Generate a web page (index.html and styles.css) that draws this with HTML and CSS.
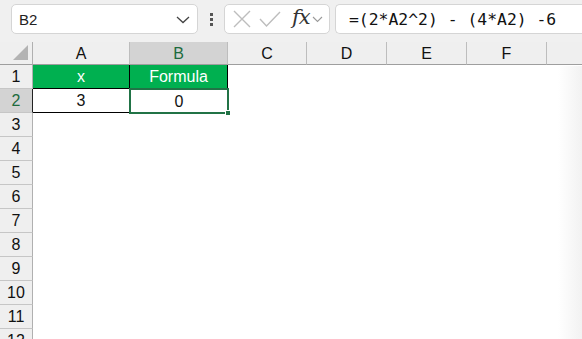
FILE: index.html
```html
<!DOCTYPE html>
<html>
<head>
<meta charset="utf-8">
<link rel="stylesheet" href="styles.css">
</head>
<body>
<div class="app">
  <div class="toolbar">
    <div class="namebox">
      <span class="name">B2</span>
      <svg class="chev" width="14" height="8" viewBox="0 0 14 8"><path d="M1 1 L7 6.5 L13 1" fill="none" stroke="#444" stroke-width="1.3"/></svg>
    </div>
    <div class="dots"><i></i><i></i><i></i></div>
    <div class="fxbox">
      <svg width="18" height="18" viewBox="0 0 18 18"><path d="M1 1 L17 17 M17 1 L1 17" stroke="#bdbdbd" stroke-width="1.4"/></svg>
      <svg width="22" height="18" viewBox="0 0 22 18"><path d="M1 9 L7.5 16 L21 2" fill="none" stroke="#bdbdbd" stroke-width="1.4"/></svg>
      <span class="fx">fx</span>
      <svg width="11" height="7" viewBox="0 0 11 7"><path d="M1 1 L5.5 5.5 L10 1" fill="none" stroke="#9a9a9a" stroke-width="1.1"/></svg>
    </div>
    <div class="formula">=(2*A2^2) - (4*A2) -6</div>
  </div>
  <div class="sheet">
    <div class="corner"><span class="tri"></span></div>
    <div class="ch">A</div>
    <div class="ch sel">B</div>
    <div class="ch">C</div>
    <div class="ch">D</div>
    <div class="ch">E</div>
    <div class="ch">F</div>
    <div class="ch last"></div>

    <div class="rh">1</div>
    <div class="c g bl">x</div>
    <div class="c g br">Formula</div>
    <div class="c"></div><div class="c"></div><div class="c"></div><div class="c"></div><div class="c"></div>

    <div class="rh sel">2</div>
    <div class="c v">3</div>
    <div class="c">0</div>
    <div class="c"></div><div class="c"></div><div class="c"></div><div class="c"></div><div class="c"></div>

    <div class="rh">3</div><div class="c"></div><div class="c"></div><div class="c"></div><div class="c"></div><div class="c"></div><div class="c"></div><div class="c"></div>
    <div class="rh">4</div><div class="c"></div><div class="c"></div><div class="c"></div><div class="c"></div><div class="c"></div><div class="c"></div><div class="c"></div>
    <div class="rh">5</div><div class="c"></div><div class="c"></div><div class="c"></div><div class="c"></div><div class="c"></div><div class="c"></div><div class="c"></div>
    <div class="rh">6</div><div class="c"></div><div class="c"></div><div class="c"></div><div class="c"></div><div class="c"></div><div class="c"></div><div class="c"></div>
    <div class="rh">7</div><div class="c"></div><div class="c"></div><div class="c"></div><div class="c"></div><div class="c"></div><div class="c"></div><div class="c"></div>
    <div class="rh">8</div><div class="c"></div><div class="c"></div><div class="c"></div><div class="c"></div><div class="c"></div><div class="c"></div><div class="c"></div>
    <div class="rh">9</div><div class="c"></div><div class="c"></div><div class="c"></div><div class="c"></div><div class="c"></div><div class="c"></div><div class="c"></div>
    <div class="rh">10</div><div class="c"></div><div class="c"></div><div class="c"></div><div class="c"></div><div class="c"></div><div class="c"></div><div class="c"></div>
    <div class="rh">11</div><div class="c"></div><div class="c"></div><div class="c"></div><div class="c"></div><div class="c"></div><div class="c"></div><div class="c"></div>
    <div class="rh">12</div><div class="c"></div><div class="c"></div><div class="c"></div><div class="c"></div><div class="c"></div><div class="c"></div><div class="c"></div>

    <div class="selbox"><span class="handle"></span></div>
    <div class="fade"></div>
  </div>
</div>
</body>
</html>
```
FILE: styles.css
```css
* { box-sizing: border-box; }
html, body { margin: 0; padding: 0; }
body { width: 582px; height: 339px; overflow: hidden; background: #fff; font-family: "Liberation Sans", Arial, sans-serif; }
.app { width: 582px; height: 339px; overflow: hidden; }
.toolbar {
  height: 42px; background: #f0f0f0;
  display: flex; align-items: flex-start; padding: 4px 0 0 11px;
}
.namebox {
  width: 187px; height: 30px; background: #fff;
  border: 1px solid #d5d5d5; border-radius: 5px;
  display: flex; align-items: center; justify-content: space-between;
  padding: 0 7px 0 7px;
}
.name { font-size: 15px; color: #222; }
.chev { margin-top: 2px; }
.dots { width: 26px; height: 30px; display: flex; flex-direction: column; align-items: center; justify-content: center; gap: 2px; }
.dots i { display: block; width: 3px; height: 3px; background: #555; }
.fxbox {
  width: 106px; height: 30px; background: #fff;
  border: 1px solid #d5d5d5; border-radius: 5px;
  display: flex; align-items: center; padding: 0 0 0 8px; gap: 0;
}
.fxbox svg:nth-child(1) { margin-right: 8px; }
.fxbox svg:nth-child(2) { margin-right: 11px; }
.fx { font-family: "DejaVu Serif", "Liberation Serif", serif; font-style: italic; font-size: 21px; color: #333; line-height: 1; margin-top: -3px; margin-right: 2px; letter-spacing: -1px; }
.formula {
  margin-left: 5px; flex: 1; height: 30px; background: #fff;
  border: 1px solid #d5d5d5; border-right: none; border-radius: 5px 0 0 5px;
  font-family: "DejaVu Sans Mono", "Liberation Mono", monospace; font-size: 16.4px; color: #111;
  display: flex; align-items: center; padding-left: 13px; padding-top: 1px; white-space: pre;
}
.sheet {
  position: relative;
  display: grid;
  grid-template-columns: 33px 97px 98px 79px 80px 80px 80px 1fr;
  grid-template-rows: 23px repeat(12, 24px);
  font-size: 16px; color: #111;
}
.corner { background: #efefef; border-right: 1px solid #b0b0b0; border-bottom: 1px solid #9e9e9e; position: relative; }
.tri { position: absolute; right: 4px; bottom: 4px; width: 0; height: 0; border-left: 15px solid transparent; border-bottom: 15px solid #b3b3b3; }
.ch {
  background: #efefef; border-right: 1px solid #bdbdbd; border-bottom: 1px solid #9e9e9e;
  display: flex; align-items: center; justify-content: center; padding-top: 1px; color: #111;
}
.ch.sel { background: #d3d3d3; color: #1d6b3d; }
.ch.last { border-right: none; }
.rh {
  background: #efefef; border-right: 1px solid #b0b0b0; border-bottom: 1px solid #c6c6c6;
  display: flex; align-items: center; justify-content: center; color: #111; padding-top: 1px;
}
.rh.sel { background: #d3d3d3; color: #1d6b3d; border-right-color: #222; }
.c { display: flex; align-items: center; justify-content: center; padding-top: 1px; }
.g { background: #00b050; color: #fff; border-bottom: 1px solid #000; }
.bl { border-right: 1px solid #000; }
.br { border-right: 1px solid #000; }
.v { border-bottom: 1px solid #000; border-right: 1px solid #000; }
.selbox {
  position: absolute; left: 129px; top: 46px; width: 100px; height: 26px;
  border: 2px solid #217346; pointer-events: none;
}
.handle { position: absolute; right: -4px; bottom: -4px; width: 6px; height: 6px; background: #217346; border: 1px solid #fff; }
.fade { position: absolute; right: 0; top: 24px; width: 24px; bottom: 0; background: linear-gradient(to right, rgba(240,240,240,0), rgba(236,236,236,0.7)); pointer-events: none; }
```
